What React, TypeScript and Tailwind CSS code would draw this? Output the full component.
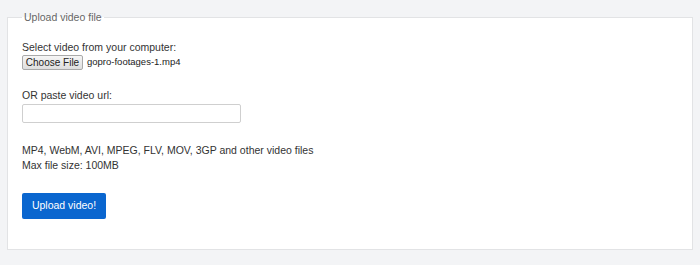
export default function App() {
  return (
    <div className="w-[700px] h-[265px] bg-[#f3f4f6] pt-[9px] px-[7px] overflow-hidden" style={{ fontFamily: '"Liberation Sans", Arial, sans-serif' }}>
      <fieldset className="w-[686px] h-[241px] border border-[#e2e3e5] bg-white pl-[14px] pr-[14px] m-0">
        <legend className="px-[2px] text-[10.5px] leading-[16px] text-[#666]">Upload video file</legend>
        <div className="mt-[14px] text-[10.5px] leading-[16px] text-[#333]">Select video from your computer:</div>
        <div className="flex items-center h-[15px]">
          <button className="h-[15px] w-[61px] px-0 text-[10px] leading-[13px] text-[#222] border border-[#a9a9a9] rounded-[2px] bg-gradient-to-b from-[#f6f6f6] to-[#dedede]">Choose File</button>
          <span className="ml-[4px] text-[9.5px] text-[#222]">gopro-footages-1.mp4</span>
        </div>
        <div className="mt-[17px] text-[10.5px] leading-[16px] text-[#333]">OR paste video url:</div>
        <input className="mt-[1px] block w-[219px] h-[19px] border border-[#cfcfcf] rounded-[2px] bg-white outline-none" />
        <div className="mt-[20px] text-[10.5px] leading-[15px] text-[#333]">MP4, WebM, AVI, MPEG, FLV, MOV, 3GP and other video files</div>
        <div className="text-[10.5px] leading-[15px] text-[#333]">Max file size: 100MB</div>
        <button className="mt-[20px] block w-[84px] h-[26px] rounded-[2px] bg-[#0a66cf] text-white text-[10.5px]">Upload video!</button>
      </fieldset>
    </div>
  );
}
